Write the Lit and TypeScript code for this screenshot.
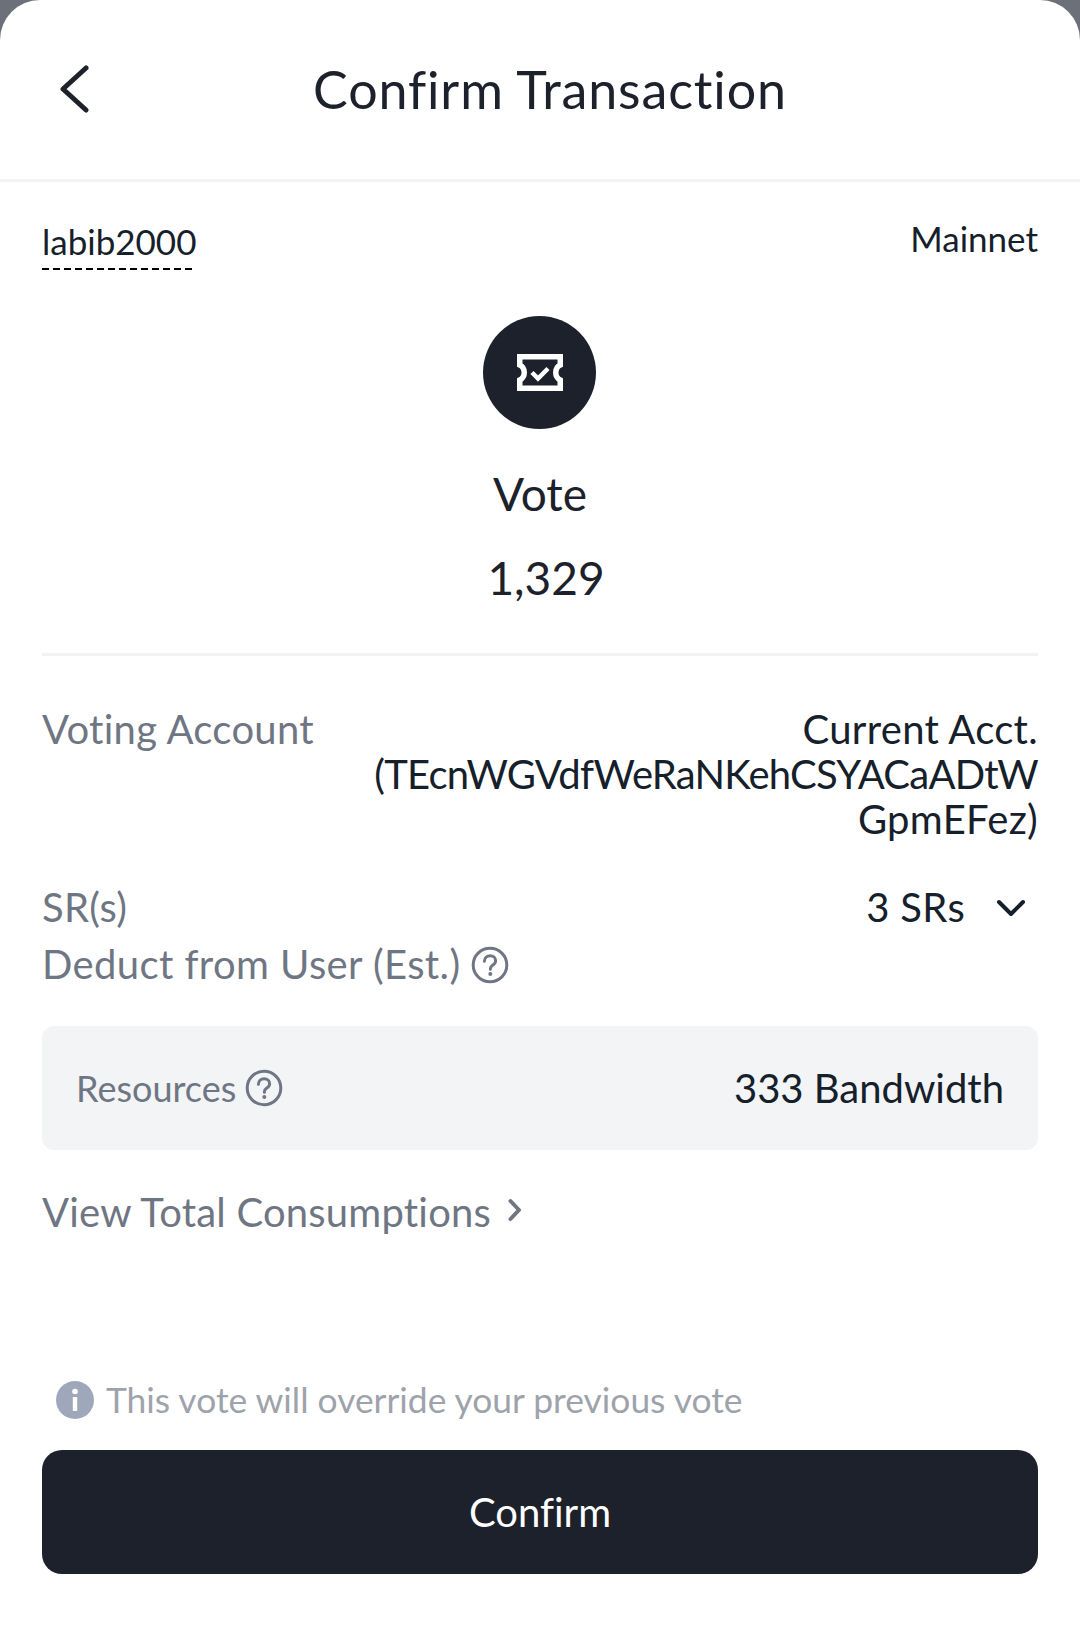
import { LitElement, html, css } from "lit";
import { customElement } from "lit/decorators.js";

const help = html`<svg class="help" viewBox="0 0 38 38" fill="none" stroke="currentColor"><circle cx="19" cy="19" r="16.800" stroke-width="3"/><path d="M13.400 15.200c0-3.200 2.500-5.400 5.700-5.400 3.100 0 5.500 2 5.500 4.900 0 2-1 3.200-2.800 4.300-1.700 1.100-2.400 1.900-2.400 3.700v.6" stroke-width="3" stroke-linecap="round"/><circle cx="19.300" cy="28" r="2" fill="currentColor" stroke="none"/></svg>`;

@customElement("app-root")
export class AppRoot extends LitElement {
  static styles = css`
    :host { display: block; width: 1080px; height: 1629px; background: #6b7079; font-family: "Lato", "Noto Sans", sans-serif; overflow: hidden; font-variant-ligatures: none; }
    .sheet { height: 1629px; background: #fff; border-radius: 40px 40px 0 0; display: flex; flex-direction: column; box-sizing: border-box; }
    .head { height: 179px; flex: none; border-bottom: 3px solid #f2f3f4; display: flex; align-items: center; justify-content: center; position: relative; padding-left: 20px; box-sizing: content-box; }
    .back { position: absolute; left: 59px; top: 65px; width: 31px; height: 48px; }
    h1 { margin: 0 0 2px; font-size: 52px; font-weight: 400; color: #1c212b; line-height: 1; letter-spacing: 0.85px; }
    .body { padding: 0 42px; display: flex; flex-direction: column; flex: 1; }
    .acct { display: flex; justify-content: space-between; height: 88px; padding-top: 36px; box-sizing: border-box; font-size: 35px; color: #15202b; }
    .name { display: block; height: 52px; width: 150px; line-height: 46px; background: repeating-linear-gradient(90deg, #000 0 7px, transparent 7px 11px) left 50px / 150px 3px no-repeat; white-space: nowrap; }
    .net { line-height: 40px; }
    .badge { width: 113px; height: 113px; border-radius: 50%; background: #1c212b; align-self: center; margin: 46px 1px 0 0; display: flex; align-items: center; justify-content: center; flex: none; }
    .badge svg { width: 46px; height: 37px; }
    .vote { text-align: center; font-size: 46px; color: #1c212b; line-height: 56px; margin-top: 37px; }
    .amt { text-align: center; font-size: 46px; color: #1c212b; line-height: 56px; margin-top: 28px; padding-left: 12px; }
    hr { border: 0; height: 3px; background: #f2f3f4; margin: 47px 0 0; width: 100%; flex: none; }
    .row { display: flex; justify-content: space-between; align-items: flex-start; font-size: 40px; line-height: 45px; letter-spacing: 0.3px; }
    .lab { color: #6f7683; display: flex; align-items: center; }
    .val { color: #15202b; text-align: right; }
    .va { margin-top: 51px; }
    .addr { letter-spacing: 0.3px; }
    .hash { letter-spacing: -0.75px; }
    .sr { margin-top: 43px; }
    .srv { display: flex; align-items: center; }
    .srv svg { width: 30px; height: 20px; margin: 0 12px 0 31px; }
    .ded { margin-top: 12px; letter-spacing: 0.4px; }
    .help { width: 38px; height: 38px; color: #6f7683; margin-left: 10px; flex: none; }
    .box { height: 124px; background: #f3f4f6; border-radius: 12px; margin-top: 39px; padding: 0 34px; display: flex; justify-content: space-between; align-items: center; flex: none; }
    .box .lab { font-size: 36px; letter-spacing: 0; }
    .box .val { font-size: 40px; }
    .box .help { margin-left: 9px; }
    .view { margin-top: 38px; font-size: 40px; line-height: 48px; color: #6f7683; display: flex; align-items: center; letter-spacing: 0.2px; }
    .view svg { width: 14px; height: 24px; margin: 0 0 4px 17px; }
    .spacer { flex: 1; }
    .note { display: flex; align-items: center; font-size: 35.400px; color: #9ea3ab; padding-left: 14px; height: 40px; margin-bottom: 3px; }
    .note svg { width: 38px; height: 38px; margin-right: 12px; }
    .note span { margin-bottom: 2px; }
    .btn { height: 124px; margin: 27px 0 55px; background: #1c212b; border-radius: 20px; color: #fff; font-size: 40px; display: flex; align-items: center; justify-content: center; flex: none; }
  `;

  render() {
    return html`<div class="sheet">
      <div class="head">
        <svg class="back" viewBox="0 0 31 48" fill="none" stroke="#1c212b" stroke-width="5" stroke-linecap="round" stroke-linejoin="round"><path d="M27 3 4 24l23 21"/></svg>
        <h1>Confirm Transaction</h1>
      </div>
      <div class="body">
        <div class="acct"><span class="name">labib2000</span><span class="net">Mainnet</span></div>
        <div class="badge"><svg viewBox="0 0 46 37" fill="none" stroke="#fff"><path stroke-width="5.500" d="M2.750 2.750h40.500v8.250c-3 1.500-4.500 4-4.500 7.500s1.500 6 4.500 7.500v8.250H2.750V26c3-1.500 4.500-4 4.500-7.500S5.750 12.500 2.750 11Z"/><path stroke-width="4.500" d="m15 18.500 6 6 10-10"/></svg></div>
        <div class="vote">Vote</div>
        <div class="amt">1,329</div>
        <hr />
        <div class="row va"><span class="lab">Voting Account</span><span class="val addr">Current Acct.<br /><span class="hash">(TEcnWGVdfWeRaNKehCSYACaADtW</span><br />GpmEFez)</span></div>
        <div class="row sr"><span class="lab">SR(s)</span><span class="val srv">3 SRs<svg viewBox="0 0 30 20" fill="none" stroke="#15202b" stroke-width="4" stroke-linecap="round" stroke-linejoin="round"><path d="M3 4l12 12L27 4"/></svg></span></div>
        <div class="row ded"><span class="lab">Deduct from User (Est.)${help}</span></div>
        <div class="box"><span class="lab">Resources${help}</span><span class="val">333 Bandwidth</span></div>
        <div class="view">View Total Consumptions<svg viewBox="0 0 14 24" fill="none" stroke="#6f7683" stroke-width="4" stroke-linecap="round" stroke-linejoin="round"><path d="M2.500 3 11 12l-8.500 9"/></svg></div>
        <div class="spacer"></div>
        <div class="note"><svg viewBox="0 0 38 38"><circle cx="19" cy="19" r="19" fill="#9fa8ba"/><circle cx="19" cy="10.500" r="2.800" fill="#fff"/><rect x="16.800" y="16" width="4.400" height="14" fill="#fff"/></svg><span>This vote will override your previous vote</span></div>
        <div class="btn">Confirm</div>
      </div>
    </div>`;
  }
}
